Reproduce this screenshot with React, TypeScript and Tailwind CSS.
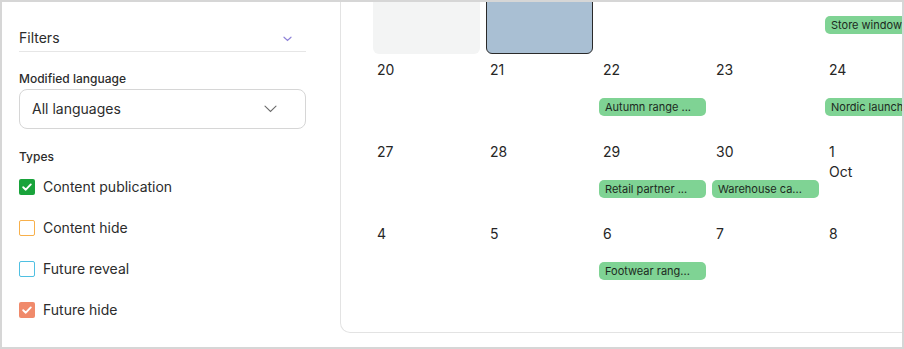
import React from "react";

type Cell = { d: string; sub?: string; chip?: string; bg?: "gray" | "blue" };

const rows: Cell[][] = [
  [{ d: "", bg: "gray" }, { d: "", bg: "blue" }, { d: "" }, { d: "" }, { d: "", chip: "Store window display" }],
  [{ d: "20" }, { d: "21" }, { d: "22", chip: "Autumn range ..." }, { d: "23" }, { d: "24", chip: "Nordic launch event" }],
  [{ d: "27" }, { d: "28" }, { d: "29", chip: "Retail partner ..." }, { d: "30", chip: "Warehouse ca..." }, { d: "1", sub: "Oct" }],
  [{ d: "4" }, { d: "5" }, { d: "6", chip: "Footwear rang..." }, { d: "7" }, { d: "8" }],
];

const Check = () => (
  <svg width="12" height="12" viewBox="0 0 12 12" fill="none">
    <path d="M2.2 6.2 L4.8 8.7 L9.8 3.4" stroke="white" strokeWidth="1.9" strokeLinecap="round" strokeLinejoin="round" />
  </svg>
);

function Box({ kind }: { kind: "green" | "orange" | "blue" | "salmon" }) {
  if (kind === "green")
    return (
      <span className="w-4 h-4 rounded-[2px] bg-[#19a33b] flex items-center justify-center shrink-0">
        <Check />
      </span>
    );
  if (kind === "salmon")
    return (
      <span className="w-4 h-4 rounded-[2px] bg-[#f08a6b] flex items-center justify-center shrink-0">
        <Check />
      </span>
    );
  if (kind === "orange") return <span className="w-4 h-4 rounded-[2px] border border-[#f8b04a] shrink-0" />;
  return <span className="w-4 h-4 rounded-[2px] border border-[#4fc0e2] shrink-0" />;
}

export default function App() {
  const font = { fontFamily: "Inter, Lato, 'Noto Sans', sans-serif" };
  return (
    <div style={font} className="w-[904px] h-[349px] border-2 border-[#d6d6d6] bg-white flex overflow-hidden text-[#2c2c2c]">
      {/* Sidebar */}
      <div className="w-[338px] shrink-0 pl-[17px] pr-[34px] pt-[26px]">
        <div className="flex items-center justify-between h-[24px] pb-[3px] border-b border-[#e6e6e6]">
          <span className="text-[14px] leading-[20px]">Filters</span>
          <svg width="9" height="6" viewBox="0 0 9 6" className="mr-[14px] mt-[2px]">
            <path d="M1 1.2 L4.5 4.5 L8 1.2" stroke="#8f83d8" strokeWidth="1.2" fill="none" strokeLinecap="round" />
          </svg>
        </div>
        <div className="mt-[19px] text-[12px] leading-[16px] font-medium">Modified language</div>
        <div className="mt-[2px] h-[40px] rounded-[8px] border border-[#d6d6d6] flex items-center justify-between pl-[12px] pr-[28px]">
          <span className="text-[14px] leading-[20px]">All languages</span>
          <svg width="13" height="8" viewBox="0 0 13 8">
            <path d="M1 1.2 L6.5 6.5 L12 1.2" stroke="#6b6b6b" strokeWidth="1.1" fill="none" strokeLinecap="round" />
          </svg>
        </div>
        <div className="mt-[20px] text-[12px] leading-[16px] font-medium">Types</div>
        <div className="mt-[12px] flex flex-col gap-[21px]">
          {([
            ["green", "Content publication"],
            ["orange", "Content hide"],
            ["blue", "Future reveal"],
            ["salmon", "Future hide"],
          ] as const).map(([k, t]) => (
            <div key={t} className="flex items-center gap-2 h-[20px]">
              <Box kind={k} />
              <span className="text-[14px] leading-[20px]">{t}</span>
            </div>
          ))}
        </div>
      </div>

      {/* Calendar panel */}
      <div className="flex-1 min-w-0 h-[331px] border-l border-b border-[#e3e3e3] rounded-bl-[10px] overflow-hidden">
        <div className="ml-[32px] -mt-[26px] grid grid-cols-[repeat(5,107px)] auto-rows-[78px] gap-x-[6px] gap-y-[4px]">
          {rows.flat().map((c, i) => (
            <div
              key={i}
              className={
                "flex flex-col rounded-[6px] " +
                (c.bg === "gray" ? "bg-[#f3f4f4] " : "") +
                (c.bg === "blue" ? "bg-[#a9bfd3] border border-[#2a2a2a] " : "")
              }
            >
              <div className="h-[40px] pt-[2px] pl-[4px] text-[14px] leading-[20px] text-[#262626]">
                {c.d && <div>{c.d}</div>}
                {c.sub && <div>{c.sub}</div>}
              </div>
              {c.chip && (
                <div className="h-[18px] rounded-[5px] bg-[#7fd394] px-[6px] text-[11px] leading-[18px] text-[#1d2a22] whitespace-nowrap overflow-hidden">
                  {c.chip}
                </div>
              )}
            </div>
          ))}
        </div>
      </div>
    </div>
  );
}
